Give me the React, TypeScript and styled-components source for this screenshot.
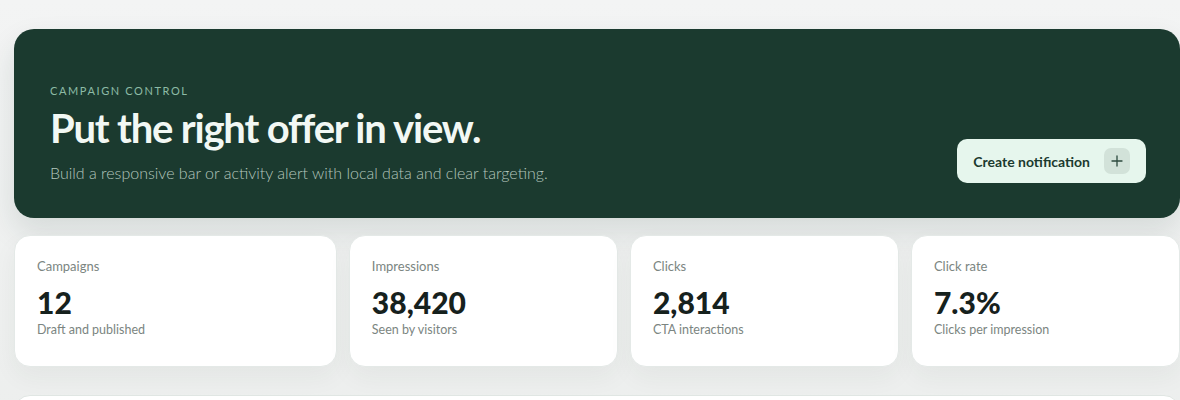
import styled, { createGlobalStyle } from "styled-components";

const GlobalStyle = createGlobalStyle`
  html, body {
    margin: 0;
    padding: 0;
    background: #eff1f0;
    font-family: "Lato", "Noto Sans", sans-serif;
    color: #16211d;
    overflow: hidden;
  }
`;

const stats = [
  { label: "Campaigns", value: "12", note: "Draft and published" },
  { label: "Impressions", value: "38,420", note: "Seen by visitors" },
  { label: "Clicks", value: "2,814", note: "CTA interactions" },
  { label: "Click rate", value: "7.3%", note: "Clicks per impression" },
];

export default function App() {
  return (
    <Page>
      <GlobalStyle />
      <Hero>
        <HeroText>
          <Eyebrow>Campaign control</Eyebrow>
          <Title>Put the right offer in view.</Title>
          <Lead>
            Build a responsive bar or activity alert with local data and clear
            targeting.
          </Lead>
        </HeroText>
        <CreateButton type="button">
          Create notification
          <PlusBox>
            <svg width="12" height="12" viewBox="0 0 12 12" fill="none">
              <path
                d="M6 1v10M1 6h10"
                stroke="#2c4a3e"
                strokeWidth="1.3"
                strokeLinecap="round"
              />
            </svg>
          </PlusBox>
        </CreateButton>
      </Hero>
      <StatGrid>
        {stats.map((s) => (
          <StatCard key={s.label}>
            <StatLabel>{s.label}</StatLabel>
            <StatValue>{s.value}</StatValue>
            <StatNote>{s.note}</StatNote>
          </StatCard>
        ))}
      </StatGrid>
      <Panel />
    </Page>
  );
}

const Page = styled.div`
  padding: 29px 0 0 14px;
  min-height: 400px;
  box-sizing: border-box;
  background: linear-gradient(180deg, #f3f4f4 0%, #eceeed 100%);
  display: flex;
  flex-direction: column;
  gap: 17px;
`;

const Hero = styled.section`
  background: #1b3a2f;
  border-radius: 20px;
  height: 189px;
  box-sizing: border-box;
  padding: 0 34px 35px 36px;
  display: flex;
  justify-content: space-between;
  align-items: flex-end;
  flex-shrink: 0;
  box-shadow: 0 14px 30px rgba(27, 58, 47, 0.12);
`;

const HeroText = styled.div`
  display: flex;
  flex-direction: column;
`;

const Eyebrow = styled.div`
  font-size: 11px;
  line-height: 14px;
  letter-spacing: 1.6px;
  text-transform: uppercase;
  color: #8dbba6;
`;

const Title = styled.h1`
  margin: 6px 0 0;
  font-size: 40px;
  line-height: 48px;
  font-weight: 700;
  letter-spacing: -1.2px;
  color: #f2f8f4;
`;

const Lead = styled.p`
  margin: 11px 0 0;
  font-size: 16px;
  line-height: 20px;
  font-weight: 300;
  color: #b4c6bd;
`;

const CreateButton = styled.button`
  display: flex;
  align-items: center;
  gap: 14px;
  height: 44px;
  margin-bottom: 0;
  padding: 0 16px;
  border: none;
  border-radius: 10px;
  background: #e6f6ed;
  color: #1b3a2f;
  font-family: "Lato", sans-serif;
  font-size: 14px;
  font-weight: 700;
  cursor: pointer;
`;

const PlusBox = styled.span`
  width: 26px;
  height: 26px;
  border-radius: 7px;
  background: #d2e2d9;
  display: flex;
  align-items: center;
  justify-content: center;
`;

const StatGrid = styled.div`
  display: grid;
  grid-template-columns: 1.2fr 1fr 1fr 1fr;
  gap: 12px;
  flex-shrink: 0;
`;

const StatCard = styled.div`
  background: #ffffff;
  border: 1px solid #e4e9e7;
  border-radius: 16px;
  height: 132px;
  box-sizing: border-box;
  padding: 22px 22px;
  display: flex;
  flex-direction: column;
  box-shadow: 0 10px 24px rgba(30, 50, 42, 0.05);
`;

const StatLabel = styled.div`
  font-size: 13px;
  line-height: 16px;
  color: #7b8581;
`;

const StatValue = styled.div`
  margin-top: 12px;
  font-size: 30px;
  line-height: 32px;
  font-weight: 900;
  color: #16211d;
`;

const StatNote = styled.div`
  margin-top: 4px;
  font-size: 12.5px;
  line-height: 16px;
  color: #7b8581;
`;

const Panel = styled.div`
  height: 60px;
  background: #ffffff;
  border: 1px solid #e0e6e3;
  border-radius: 16px;
  margin-top: 11px;
  flex-shrink: 0;
`;
